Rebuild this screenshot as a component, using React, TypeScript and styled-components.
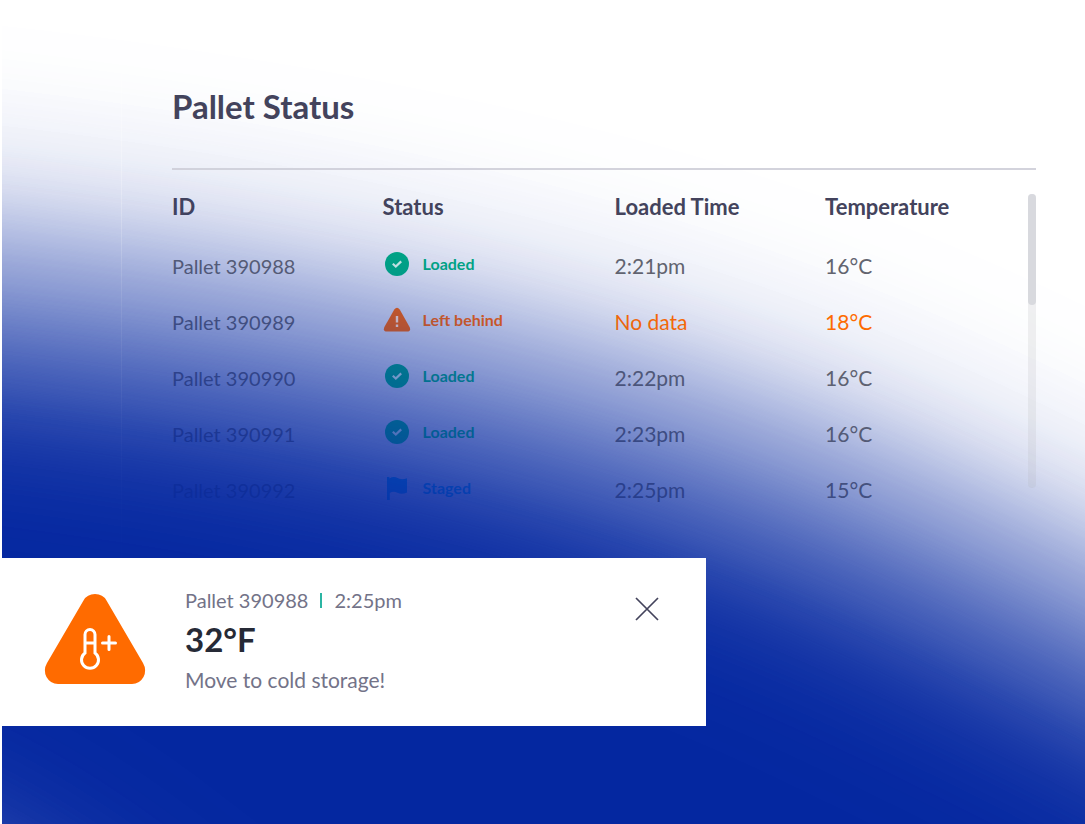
import React from "react";
import styled, { createGlobalStyle } from "styled-components";

const GlobalStyle = createGlobalStyle`
  *, *::before, *::after { box-sizing: border-box; }
  body {
    margin: 0;
    background: #fff;
    color: #43435c;
    font-family: Lato, "Liberation Sans", sans-serif;
  }
`;

const Stage = styled.main`
  position: relative;
  min-height: 100vh;
  margin-left: 2px;
  overflow: hidden;
  isolation: isolate;
`;

const GlowSvg = styled.svg<{ $layer: number }>`
  position: absolute;
  inset: 0;
  z-index: ${(p) => p.$layer};
  width: 100%;
  height: 100%;
  pointer-events: none;
`;

const Columns = styled.div`
  display: flex;
`;

const Rail = styled.aside`
  flex: 0 0 120px;
  margin-top: 40px;
  border-right: 1px solid rgba(255, 255, 255, 0.3);
`;

const Panel = styled.section`
  flex: 1;
  min-width: 0;
  padding: 86px 49px 40px 50px;
`;

const Title = styled.h1`
  margin: 0;
  padding-bottom: 42px;
  border-bottom: 2px solid #d3d3dc;
  font-size: 33px;
  line-height: 40px;
  font-weight: 700;
`;

const ScrollArea = styled.div`
  display: flex;
  align-items: flex-start;
  padding-top: 24px;
`;

const Table = styled.table`
  flex: 1;
  table-layout: fixed;
  border-collapse: collapse;
  text-align: left;
`;

const HeadCell = styled.th<{ $width?: string }>`
  width: ${(p) => p.$width ?? "auto"};
  height: 44px;
  padding: 0;
  vertical-align: top;
  font-size: 22px;
  line-height: 26px;
  font-weight: 700;
`;

const Cell = styled.td<{ $alert?: boolean }>`
  height: 56px;
  padding: 0;
  font-size: 21px;
  line-height: 26px;
  color: ${(p) => (p.$alert ? "#ff6b00" : "#62646f")};
`;

const IdCell = styled(Cell)`
  font-size: 20px;
`;

const StatusCell = styled(Cell)`
  padding-bottom: 4px;
`;

type Kind = "loaded" | "behind" | "staged";

const kindColor: Record<Kind, string> = {
  loaded: "#00a884",
  behind: "#ee620f",
  staged: "#0b8be0",
};

const Status = styled.span<{ $kind: Kind }>`
  display: flex;
  align-items: center;
  gap: 12px;
  color: ${(p) => kindColor[p.$kind]};
  font-size: 16px;
  line-height: 20px;
  font-weight: 700;
`;

const Track = styled.div`
  width: 8px;
  height: 294px;
  border-radius: 4px;
  background: rgba(195, 195, 200, 0.25);
`;

const Thumb = styled.div`
  width: 8px;
  height: 111px;
  border-radius: 4px;
  background: #d8d9de;
`;

const Alert = styled.section`
  position: relative;
  z-index: 3;
  display: flex;
  align-items: flex-start;
  width: 65%;
  min-height: 168px;
  padding: 28px 41px;
  background: #fff;
`;

const AlertText = styled.div`
  flex: 1;
  padding: 1px 0 0 38px;
  color: #737388;
  line-height: 26px;
`;

const Meta = styled.p`
  display: flex;
  align-items: center;
  gap: 12px;
  margin: 0;
  font-size: 20px;
`;

const Bar = styled.span`
  width: 2px;
  height: 15px;
  background: #2bb5a3;
`;

const Reading = styled.strong`
  display: block;
  margin: 6px 0 8px;
  color: #262a36;
  font-size: 33px;
  line-height: 40px;
  font-weight: 700;
`;

const Message = styled.p`
  margin: 0;
  font-size: 21px;
`;

const CloseButton = styled.button`
  display: grid;
  place-items: center;
  width: 36px;
  height: 36px;
  margin-top: 5px;
  padding: 0;
  border: 0;
  background: none;
  cursor: pointer;
`;

const GLOW_PATH =
  "M-700 236 L-300 260 L0 286 L300 330 L580 394 L820 476 L1060 592 L1240 684 L1500 836 L1500 1600 L500 1500 L260 1200 L-80 940 L-700 720 Z";

function Glow({ id, layer, alpha }: { id: string; layer: number; alpha: string }) {
  return (
    <GlowSvg $layer={layer} viewBox="0 0 1083 824" preserveAspectRatio="none" aria-hidden="true">
      <filter
        id={id}
        filterUnits="userSpaceOnUse"
        x="-700"
        y="-300"
        width="2400"
        height="2000"
        colorInterpolationFilters="sRGB"
      >
        <feGaussianBlur stdDeviation="118" />
        <feComponentTransfer>
          <feFuncA type="table" tableValues={alpha} />
        </feComponentTransfer>
      </filter>
      <path d={GLOW_PATH} fill="#0427a0" filter={`url(#${id})`} />
    </GlowSvg>
  );
}

function StatusIcon({ kind }: { kind: Kind }) {
  return (
    <svg width="28" height="26" viewBox="0 0 28 26" aria-hidden="true">
      {kind === "loaded" && (
        <>
          <circle cx="14" cy="13" r="12" fill="currentColor" />
          <path d="M9.800 12.800 L12.800 15.600 L18.200 10.400" fill="none" stroke="#fff" strokeOpacity=".8" strokeWidth="2.200" />
        </>
      )}
      {kind === "behind" && (
        <>
          <path
            d="M11.3 2.6 Q14 -1.2 16.7 2.6 L26.6 20 Q28.4 24.4 24 24.6 H4 Q-.4 24.4 1.4 20 Z"
            fill="currentColor"
          />
          <path d="M14 9 V15.6 M14 17.6 V20" stroke="#fff" strokeOpacity=".8" strokeWidth="2.4" />
        </>
      )}
      {kind === "staged" && (
        <path
          d="M4 2 H6.4 V3.4 Q10.5 .8 14.5 3 Q19 5.4 24 3.2 V17.6 Q18.6 20 14.4 17.8 Q10.4 15.8 6.8 18 V25 H4 Z"
          fill="currentColor"
        />
      )}
    </svg>
  );
}

const labels: Record<Kind, string> = {
  loaded: "Loaded",
  behind: "Left behind",
  staged: "Staged",
};

interface Pallet {
  id: string;
  kind: Kind;
  time: string;
  temp: string;
}

const pallets: Pallet[] = [
  { id: "390988", kind: "loaded", time: "2:21pm", temp: "16°C" },
  { id: "390989", kind: "behind", time: "No data", temp: "18°C" },
  { id: "390990", kind: "loaded", time: "2:22pm", temp: "16°C" },
  { id: "390991", kind: "loaded", time: "2:23pm", temp: "16°C" },
  { id: "390992", kind: "staged", time: "2:25pm", temp: "15°C" },
];

export default function App() {
  return (
    <>
      <GlobalStyle />
      <Stage>
        <Glow id="glow-back" layer={-1} alpha="0 .065 .13 .18 .19 .19 .22 .27 .31 .36 .45" />
        <Columns>
          <Rail />
          <Panel>
            <Title>Pallet Status</Title>
            <ScrollArea>
              <Table>
                <thead>
                  <tr>
                    <HeadCell scope="col" $width="24.6%">ID</HeadCell>
                    <HeadCell scope="col" $width="27.1%">Status</HeadCell>
                    <HeadCell scope="col" $width="24.6%">Loaded Time</HeadCell>
                    <HeadCell scope="col">Temperature</HeadCell>
                  </tr>
                </thead>
                <tbody>
                  {pallets.map((p) => (
                    <tr key={p.id}>
                      <IdCell>Pallet {p.id}</IdCell>
                      <StatusCell>
                        <Status $kind={p.kind}>
                          <StatusIcon kind={p.kind} />
                          {labels[p.kind]}
                        </Status>
                      </StatusCell>
                      <Cell $alert={p.kind === "behind"}>{p.time}</Cell>
                      <Cell $alert={p.kind === "behind"}>{p.temp}</Cell>
                    </tr>
                  ))}
                </tbody>
              </Table>
              <Track>
                <Thumb />
              </Track>
            </ScrollArea>
          </Panel>
        </Columns>
        <Glow id="glow-front" layer={2} alpha="0 .01 .05 .13 .25 .36 .46 .56 .68 .84 1" />
        <Alert role="alert">
          <svg width="104" height="102" viewBox="0 0 104 102" aria-hidden="true">
            <path
              d="M40.5 14.5 Q44 8 52 8 Q60 8 63.500 14.500 L100 77 Q104 84 100.500 91 Q96.500 98 89 98 H15 Q7.500 98 3.500 91 Q0 84 4 77 Z"
              fill="#ff6b00"
            />
            <g fill="none" stroke="#fff" strokeWidth="3" strokeLinecap="round">
              <path d="M42 67 V48.500 A5 5 0 0 1 52 48.500 V67 A8.500 8.500 0 1 1 42 67 Z" />
              <path d="M42.500 57 H51.500 M59.500 57 H72.500 M66 50.500 V63.500" />
            </g>
          </svg>
          <AlertText>
            <Meta>
              <span>Pallet 390988</span>
              <Bar />
              <span>2:25pm</span>
            </Meta>
            <Reading>32°F</Reading>
            <Message>Move to cold storage!</Message>
          </AlertText>
          <CloseButton type="button" aria-label="Dismiss alert">
            <svg width="24" height="24" viewBox="0 0 24 24" aria-hidden="true">
              <path d="M1 1 L23 23 M23 1 L1 23" stroke="#43435c" strokeWidth="1.700" />
            </svg>
          </CloseButton>
        </Alert>
      </Stage>
    </>
  );
}
